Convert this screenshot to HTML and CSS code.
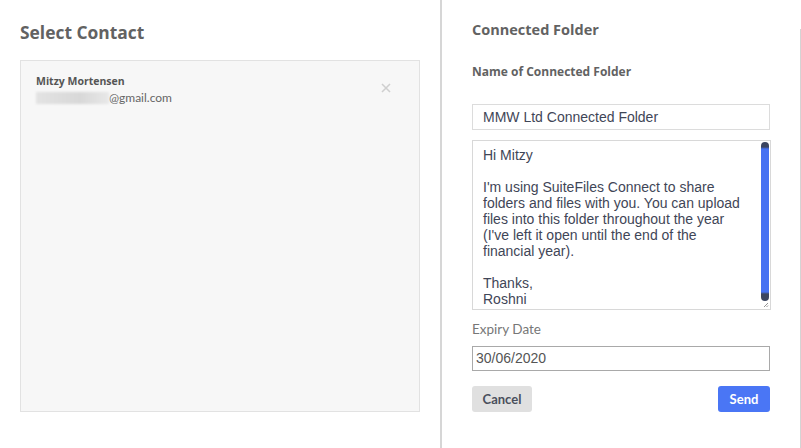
FILE: index.html
```html
<!DOCTYPE html>
<html>
<head>
<meta charset="utf-8">
<link rel="stylesheet" href="styles.css">
</head>
<body>
<div class="page">
  <section class="left">
    <h1 class="title">Select Contact</h1>
    <div class="contact-box">
      <div class="contact">
        <div class="contact-info">
          <div class="contact-name">Mitzy Mortensen</div>
          <div class="contact-email"><span class="blur"></span>@gmail.com</div>
        </div>
        <svg class="remove" width="10" height="10" viewBox="0 0 10 10"><path d="M1 1L9 9M9 1L1 9" stroke="#cfcfcf" stroke-width="1.6"/></svg>
      </div>
    </div>
  </section>
  <section class="right">
    <h2 class="subtitle">Connected Folder</h2>
    <div class="label">Name of Connected Folder</div>
    <div class="input name-input">MMW Ltd Connected Folder</div>
    <div class="textarea">
      <div class="ta-text">Hi Mitzy<br><br>I'm using SuiteFiles Connect to share folders and files with you. You can upload files into this folder throughout the year (I've left it open until the end of the financial year).<br><br>Thanks,<br>Roshni</div>
      <div class="thumb"></div>
      <svg class="grip" width="6" height="6" viewBox="0 0 6 6"><path d="M5 1L1 5M5 3.5L3.5 5" stroke="#777" stroke-width="0.8"/></svg>
    </div>
    <div class="label2">Expiry Date</div>
    <div class="input date-input">30/06/2020</div>
    <div class="actions">
      <button class="btn cancel">Cancel</button>
      <button class="btn send">Send</button>
    </div>
  </section>
  <div class="edge"></div>
</div>
</body>
</html>
```
FILE: styles.css
```css
html, body { margin: 0; padding: 0; background: #fff; }
body { width: 801px; height: 448px; overflow: hidden; font-family: "Lato", "Liberation Sans", sans-serif; }
.page { display: flex; height: 448px; }
.left { width: 420px; padding-left: 20px; border-right: 2px solid #d6d6d6; box-sizing: content-box; }
.title { margin: 21px 0 0; font-family: "Open Sans", sans-serif; font-size: 17.4px; font-weight: 700; color: #626262; line-height: 22px; }
.contact-box { margin-top: 17px; width: 398px; height: 350px; background: #f7f7f7; border: 1px solid #e2e2e2; }
.contact { display: flex; justify-content: space-between; padding: 13px 0 0 15px; }
.contact-name { font-family: "Open Sans", sans-serif; font-size: 10.5px; font-weight: 700; color: #555; line-height: 14px; }
.contact-email { display: flex; align-items: center; font-size: 12px; color: #666; line-height: 16px; margin-top: 2px; font-family: "Lato", sans-serif; }
.blur { display: inline-block; width: 73px; height: 12px; background: linear-gradient(90deg, #e3e3e3, #d8d8d8 60%, #e8e8e8); filter: blur(0.8px); }
.remove { margin: 9px 28px 0 0; }
.right { width: 298px; padding: 0 30px; display: flex; flex-direction: column; }
.subtitle { margin: 21px 0 0; font-family: "Open Sans", sans-serif; font-size: 14.5px; font-weight: 700; color: #626262; line-height: 18px; }
.label { margin-top: 26px; font-family: "Open Sans", sans-serif; font-size: 12px; font-weight: 700; color: #626262; line-height: 14px; }
.input { box-sizing: border-box; width: 298px; font-family: "Liberation Sans", Arial, sans-serif; font-size: 14px; color: #3f4657; }
.name-input { margin-top: 25px; height: 26px; border: 1px solid #dcdcdc; padding: 4px 10px; line-height: 16px; }
.textarea { position: relative; box-sizing: border-box; margin-top: 10px; width: 299px; height: 170px; border: 1px solid #d8d8d8; overflow: hidden; }
.ta-text { padding: 6px 20px 0 10px; font-family: "Liberation Sans", Arial, sans-serif; font-size: 14px; line-height: 16px; color: #3f4657; }
.thumb { position: absolute; right: 1px; top: 1px; width: 8px; height: 159px; border-radius: 4px; background: linear-gradient(#3b4560 0, #3b4560 5px, #4571f2 7px, #4571f2 150px, #3b4560 152px); }
.grip { position: absolute; right: 1px; bottom: 1px; }
.label2 { margin-top: 11px; font-size: 13.5px; color: #777; line-height: 16px; }
.date-input { margin-top: 9px; height: 25px; border: 1px solid #a9a9a9; padding: 3px 3px; line-height: 17px; color: #555; }
.actions { display: flex; justify-content: space-between; margin-top: 15px; }
.btn { border: none; border-radius: 3px; height: 26px; font-family: "Lato", sans-serif; font-size: 13px; font-weight: 700; padding: 0; }
.cancel { width: 60px; background: #e0e0e0; color: #4a4f5c; }
.send { width: 52px; background: #4a76f5; color: #fff; }
.edge { width: 1px; margin-top: 29px; height: 419px; background: #d4d4d4; }
```
